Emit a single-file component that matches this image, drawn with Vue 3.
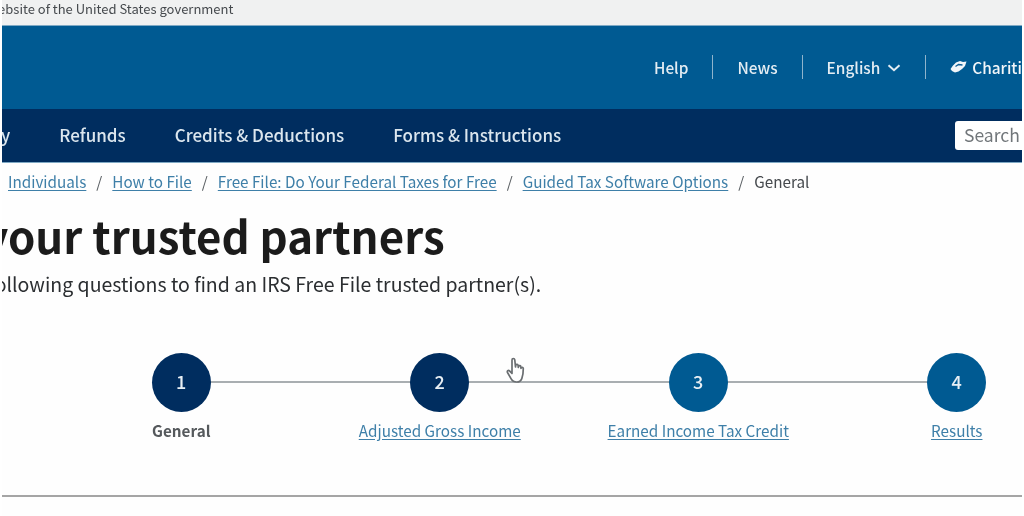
<script setup>
const crumbs = [
  'Individuals',
  'How to File',
  'Free File: Do Your Federal Taxes for Free',
  'Guided Tax Software Options',
]

const steps = [
  { num: 1, label: 'General', current: true, dark: true },
  { num: 2, label: 'Adjusted Gross Income', dark: true },
  { num: 3, label: 'Earned Income Tax Credit' },
  { num: 4, label: 'Results' },
]
</script>

<template>
  <div class="page">
    <div class="gov-banner">
      <span class="gov-text">An official website of the United States government</span>
    </div>

    <header class="top-bar">
      <a class="top-link">Help</a>
      <span class="sep"></span>
      <a class="top-link">News</a>
      <span class="sep"></span>
      <a class="top-link">
        English
        <svg class="chevron" width="14" height="8" viewBox="0 0 14 8">
          <path d="M1.5 1.2 7 6.2l5.5-5" fill="none" stroke="#e4edf3" stroke-width="2" />
        </svg>
      </a>
      <span class="sep"></span>
      <a class="top-link charities">
        <svg width="17" height="13" viewBox="0 0 17 13">
          <path d="M.5 9 3 5.500 6 2.500 10 1l3 1 3.500-.5-1.500 4.500-3 3-3.500 2.500L5 12.500 2 11z" fill="#f2f6f9" />
          <path d="M5.500 6.500 8.500 4.500l4 .5" fill="none" stroke="#0f5f95" stroke-width="1.300" />
        </svg>
        Charities &amp; Nonprofits
      </a>
    </header>

    <nav class="main-nav">
      <a class="nav-first">Pay</a>
      <a>Refunds</a>
      <a>Credits &amp; Deductions</a>
      <a>Forms &amp; Instructions</a>
      <div class="search-box">Search</div>
    </nav>

    <div class="breadcrumb">
      <template v-for="c in crumbs" :key="c">
        <a>{{ c }}</a>
        <span class="slash">/</span>
      </template>
      <span class="crumb-current">General</span>
    </div>

    <h1 class="title">Find your trusted partners</h1>
    <p class="intro">Answer the following questions to find an IRS Free File trusted partner(s).</p>

    <div class="stepper">
      <div class="step-line"></div>
      <div v-for="s in steps" :key="s.num" class="step">
        <div class="circle" :class="{ dark: s.dark }">{{ s.num }}</div>
        <span class="step-label" :class="{ current: s.current }">{{ s.label }}</span>
      </div>
      <svg class="hand" width="20" height="28" viewBox="0 0 20 28">
        <path d="M6 3c0-2 2.500-2 2.800 0l.7 7 .3-1.800c.4-1.300 2.200-1 2.300.3l.2 2 .4-1.200c.5-1 2-.8 2.100.5l.2 1.500.5-.7c.7-.6 1.800-.2 1.800 1 0 4-.3 7-1.500 10-.8 2-2.800 3.400-5 3.400-2.800 0-4.500-1-5.800-3.400L1.500 15.500c-.7-1.300.8-2.800 2-1.700L6 16.500z" fill="#fff" stroke="#6a6e71" stroke-width="1.700" stroke-linejoin="round" />
      </svg>
    </div>

    <hr class="rule" />
  </div>
</template>

<style>
html,
body {
  margin: 0;
  background: #fff;
  overflow: hidden;
}
</style>

<style scoped>
.page {
  width: 1024px;
  height: 516px;
  overflow: hidden;
  background: #fefefe;
  font-family: "Noto Sans CJK SC", "Noto Sans", sans-serif;
  color: #1b1b1b;
  filter: blur(0.45px);
  border-right: 2px solid #fff;
  border-left: 2px solid #fff;
  box-sizing: border-box;
}

.gov-banner {
  height: 25px;
  background: #f0f1f1;
  border-bottom: 1px solid #7fa9c4;
  overflow: hidden;
  white-space: nowrap;
  font-size: 13px;
  line-height: 18px;
  color: #45494d;
}

.gov-text {
  display: block;
  margin-left: -77px;
}

.top-bar {
  height: 83px;
  padding-bottom: 2px;
  box-sizing: border-box;
  background: #005a92;
  display: flex;
  align-items: center;
  padding-left: 652px;
  color: #e4edf3;
  font-size: 15.4px;
  font-weight: 500;
  white-space: nowrap;
  overflow: hidden;
}

.top-link {
  display: flex;
  align-items: center;
  gap: 7px;
  flex-shrink: 0;
}

.chevron {
  margin-top: 2px;
}

.sep {
  flex-shrink: 0;
  width: 1px;
  height: 24px;
  margin: 0 24px;
  background: #8fb4cc;
}

.charities {
  gap: 5px;
  color: #f2f6f9;
}

.main-nav {
  height: 54px;
  padding-bottom: 2px;
  box-sizing: border-box;
  background: #002d5f;
  border-bottom: 1px solid #7fa9c4;
  display: flex;
  align-items: center;
  gap: 49px;
  color: #dbe6ee;
  font-size: 17px;
  font-weight: 500;
  white-space: nowrap;
  overflow: hidden;
}

.nav-first {
  flex-shrink: 0;
  margin-left: -21px;
}

.search-box {
  flex-shrink: 0;
  margin-left: auto;
  margin-right: -30px;
  margin-top: 2px;
  width: 97px;
  height: 29px;
  line-height: 28px;
  background: #fff;
  border-radius: 3px;
  padding-left: 9px;
  color: #71767a;
  font-size: 17.500px;
  font-weight: 400;
  box-sizing: border-box;
}

.breadcrumb {
  height: 36px;
  padding-left: 6px;
  display: flex;
  align-items: center;
  gap: 10px;
  font-size: 15.250px;
  white-space: nowrap;
  color: #5a5f63;
}

.breadcrumb a {
  color: #3e7fa8;
  text-decoration: underline;
  text-underline-offset: 2px;
}

.crumb-current {
  color: #45494d;
}

.title {
  margin: 6px 0 0 -124px;
  font-size: 43.800px;
  line-height: 60px;
  font-weight: 700;
  color: #1b1b1b;
  white-space: nowrap;
}

.intro {
  margin: 4px 0 0 -119px;
  font-size: 19.500px;
  line-height: 30px;
  white-space: nowrap;
  color: #2b2e31;
}

.stepper {
  position: relative;
  display: flex;
  margin: 54px 0 0 50px;
  width: 1034px;
}

.step-line {
  position: absolute;
  left: 129px;
  top: 28px;
  width: 776px;
  height: 2px;
  background: #a9aeb1;
}

.step {
  position: relative;
  width: 258.5px;
  display: flex;
  flex-direction: column;
  align-items: center;
  gap: 8px;
}

.circle {
  width: 59px;
  height: 59px;
  padding-bottom: 3px;
  box-sizing: border-box;
  border-radius: 50%;
  background: #005a92;
  color: #e8eff4;
  font-size: 18px;
  font-weight: 500;
  display: flex;
  align-items: center;
  justify-content: center;
}

.circle.dark {
  background: #002d5f;
}

.step-label {
  font-size: 15.250px;
  line-height: 20px;
  color: #3e7fa8;
  text-decoration: underline;
  text-underline-offset: 2px;
  white-space: nowrap;
}

.step-label.current {
  color: #55595c;
  font-weight: 700;
  text-decoration: none;
}

.hand {
  position: absolute;
  left: 454px;
  top: 4px;
}

.rule {
  margin: 55px 0 0;
  border: 0;
  height: 2px;
  background: #a5a5a5;
}
</style>
